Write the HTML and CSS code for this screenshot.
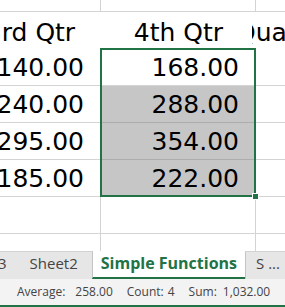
FILE: index.html
```html
<!DOCTYPE html>
<html>
<head>
    <title>Simple Functions</title>
    <link rel="stylesheet" href="styles.css">
</head>
<body>
    <div class="sheet">
        <div class="grid">
            <div class="cell top"></div>
            <div class="cell top"></div>
            <div class="cell top last"></div>

            <div class="cell head">3rd Qtr</div>
            <div class="cell head">4th Qtr</div>
            <div class="cell head clip"><span>Quarter</span></div>

            <div class="cell num">140.00</div>
            <div class="cell num">168.00</div>
            <div class="cell last"></div>

            <div class="cell num">240.00</div>
            <div class="cell num picked">288.00</div>
            <div class="cell last"></div>

            <div class="cell num">295.00</div>
            <div class="cell num picked">354.00</div>
            <div class="cell last"></div>

            <div class="cell num">185.00</div>
            <div class="cell num picked">222.00</div>
            <div class="cell last"></div>

            <div class="cell"></div>
            <div class="cell"></div>
            <div class="cell last"></div>

            <div class="cell short"></div>
            <div class="cell short"></div>
            <div class="cell short last"></div>
        </div>

        <div class="selection">
            <div class="handle"></div>
        </div>
    </div>

    <div class="tabs">
        <div class="tab first">3</div>
        <div class="sep"></div>
        <div class="tab">Sheet2</div>
        <div class="tab active">Simple Functions</div>
        <div class="tab more">S ...</div>
    </div>

    <div class="status">
        <span>Average:<span class="val wide">258.00</span></span>
        <span>Count:<span class="val">4</span></span>
        <span>Sum:<span class="val mid">1,032.00</span></span>
    </div>
</body>
</html>
```

FILE: styles.css
```css
* {
    box-sizing: border-box;
}

body {
    margin: 0;
    width: 285px;
    height: 307px;
    overflow: hidden;
    background: #fff;
    font-family: "Segoe UI", "Open Sans", sans-serif;
}

.sheet {
    position: relative;
    height: 251px;
    overflow: hidden;
}

.grid {
    display: grid;
    grid-template-columns: 141px 155px 70px;
    grid-template-rows: 12px 37px 37px 37px 37px 37px 37px 17px;
    margin-left: -40px;
    font-family: "DejaVu Sans", sans-serif;
    font-size: 25px;
    color: #000;
}

.cell {
    border-right: 1px solid #d4d4d4;
    border-bottom: 1px solid #d4d4d4;
    white-space: nowrap;
}

.cell.last {
    border-right: none;
}

.cell.short {
    border-bottom: none;
}

.cell.head {
    border: none;
    padding-top: 4px;
    line-height: 33px;
    text-align: center;
}

.cell.clip {
    margin-left: -4px;
    overflow: hidden;
    text-align: left;
    text-indent: -16px;
}

.cell.num {
    padding: 2px 16px 0 0;
    line-height: 34px;
    text-align: right;
}

.cell.picked {
    background: #c6c6c6;
    border-bottom-color: #adadad;
}

.selection {
    position: absolute;
    left: 100px;
    top: 48px;
    width: 156px;
    height: 149px;
    border: 2px solid #217346;
}

.handle {
    position: absolute;
    right: -5px;
    bottom: -5px;
    width: 7px;
    height: 7px;
    background: #217346;
    border: 1px solid #fff;
}

.tabs {
    display: flex;
    height: 28px;
    background: #e6e6e6;
    border-top: 1px solid #d2d2d2;
    font-size: 15px;
    color: #444;
}

.tab {
    padding: 0 14px 0 10px;
    line-height: 22px;
    white-space: nowrap;
}

.tab.first {
    margin-left: -2px;
    padding: 0 13px 0 0;
}

.sep {
    width: 1px;
    height: 19px;
    margin-top: 4px;
    background: #b4b4b4;
}

.tab.active {
    margin-top: -1px;
    padding: 1px 8px 0 8px;
    background: #fff;
    border-left: 1px solid #c4c4c4;
    border-bottom: 2px solid #217346;
    color: #217346;
    font-weight: bold;
    font-size: 16px;
}

.tab.more {
    padding-left: 10px;
    border-left: 1px solid #c4c4c4;
}

.status {
    display: flex;
    gap: 14px;
    height: 28px;
    padding: 5px 0 0 17px;
    background: #f3f3f3;
    border-bottom: 2px solid #217346;
    font-size: 12px;
    line-height: 16px;
    color: #444;
}

.val {
    margin-left: 4px;
}

.val.wide {
    margin-left: 10px;
}

.val.mid {
    margin-left: 6px;
}
```
